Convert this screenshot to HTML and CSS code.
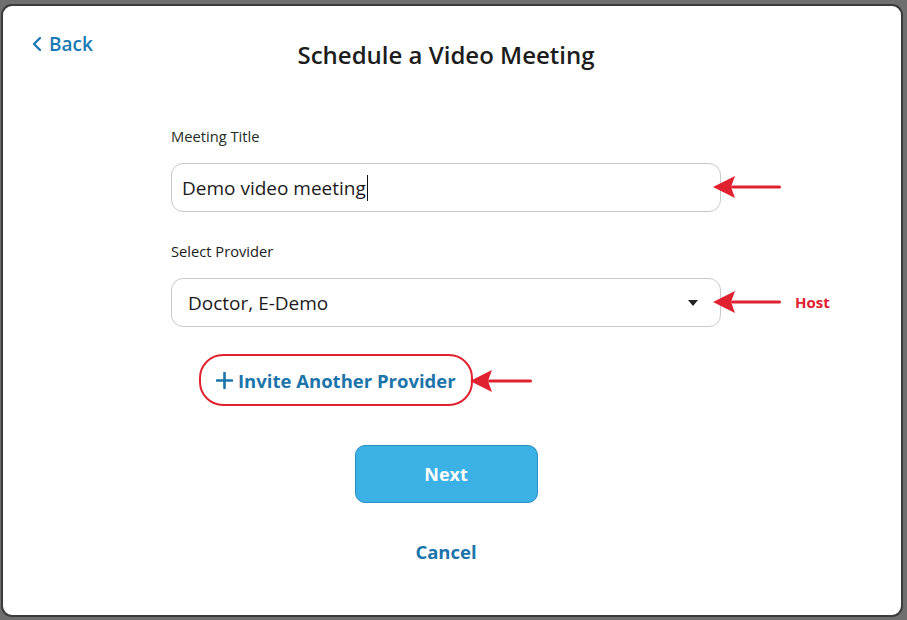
FILE: index.html
```html
<!DOCTYPE html>
<html>
<head>
<meta charset="utf-8">
<link rel="stylesheet" href="styles.css">
</head>
<body>
<div class="modal">
  <div class="header">
    <a class="back" href="#">
      <svg class="chev" width="12" height="16" viewBox="0 0 12 16"><path d="M9 2 L3 8 L9 14" fill="none" stroke="#1a7ab4" stroke-width="2.4" stroke-linecap="round" stroke-linejoin="round"/></svg>
      <span>Back</span>
    </a>
    <h1 class="title">Schedule a Video Meeting</h1>
  </div>
  <div class="content">
    <label class="label label-title">Meeting Title</label>
    <div class="field">
      <div class="input"><span>Demo video meeting</span><span class="caret"></span></div>
      <svg class="arrow arrow-1" width="70" height="26" viewBox="0 0 70 26"><path d="M0 13 L22 2 L18 13 L22 24 Z" fill="#e0212f"/><rect x="18" y="11.5" width="50" height="3" rx="1.5" fill="#e0212f"/></svg>
    </div>
    <label class="label label-provider">Select Provider</label>
    <div class="field">
      <div class="input select"><span>Doctor, E-Demo</span><span class="tri"></span></div>
      <svg class="arrow arrow-2" width="70" height="26" viewBox="0 0 70 26"><path d="M0 13 L22 2 L18 13 L22 24 Z" fill="#e0212f"/><rect x="18" y="11.5" width="50" height="3" rx="1.5" fill="#e0212f"/></svg>
      <span class="host">Host</span>
    </div>
    <div class="invite-row">
      <a class="invite" href="#"><svg class="plus" width="17" height="17" viewBox="0 0 17 17"><path d="M8.5 1 V16 M1 8.5 H16" stroke="#1b74aa" stroke-width="2.6" stroke-linecap="round"/></svg><span>Invite Another Provider</span></a>
      <svg class="arrow arrow-3" width="64" height="26" viewBox="0 0 64 26"><path d="M0 13 L22 2 L18 13 L22 24 Z" fill="#e0212f"/><rect x="18" y="11.5" width="44" height="3" rx="1.5" fill="#e0212f"/></svg>
    </div>
    <button class="next">Next</button>
    <a class="cancel" href="#">Cancel</a>
  </div>
</div>
</body>
</html>
```
FILE: styles.css
```css
* { box-sizing: border-box; }
html, body { margin: 0; padding: 0; }
body {
  width: 907px;
  height: 620px;
  background: #6f6f6f;
  padding: 4px 3px 3px 1px;
  font-family: "Open Sans", "Noto Sans", sans-serif;
  overflow: hidden;
}
.modal {
  width: 902px;
  height: 613px;
  background: #fff;
  border: 2px solid #3c3c3c;
  border-radius: 11px;
  display: flex;
  flex-direction: column;
}
.header {
  display: grid;
  grid-template-columns: 140px 550px;
  padding-left: 28px;
  padding-top: 26px;
}
.back {
  display: flex;
  align-items: center;
  gap: 6px;
  color: #1a7ab4;
  text-decoration: none;
  font-size: 19px;
  font-weight: 600;
  line-height: 24px;
  height: 24px;
}
.chev { display: block; }
.title {
  margin: 8px 0 0 0;
  text-align: center;
  font-size: 24px;
  font-weight: 600;
  line-height: 30px;
  color: #1d1d1d;
}
.content {
  margin-left: 168px;
  width: 550px;
  display: flex;
  flex-direction: column;
  align-items: flex-start;
}
.label {
  font-size: 14.7px;
  line-height: 18px;
  font-weight: 500;
  color: #1e2e24;
}
.label-title { margin-top: 57px; }
.label-provider { margin-top: 30px; color: #1c1c1c; }
.field {
  position: relative;
  width: 550px;
  margin-top: 18px;
}
.input {
  width: 550px;
  height: 49px;
  border: 1px solid #c9c9c9;
  border-radius: 12px;
  display: flex;
  align-items: center;
  padding-left: 10px;
  font-size: 19px;
  color: #1b1b1b;
}
.caret {
  display: inline-block;
  width: 1.5px;
  height: 26px;
  background: #111;
  margin-left: 1px;
}
.select { padding-left: 16px; padding-right: 22px; justify-content: space-between; }
.tri {
  width: 0; height: 0;
  border-left: 5px solid transparent;
  border-right: 5px solid transparent;
  border-top: 6px solid #222;
}
.arrow { position: absolute; top: 11px; left: 542px; }
.host {
  position: absolute;
  left: 624px;
  top: 14px;
  color: #e0212f;
  font-weight: 700;
  font-size: 15px;
  line-height: 20px;
}
.invite-row {
  position: relative;
  margin-top: 27px;
  margin-left: 28px;
}
.invite {
  display: flex;
  align-items: center;
  gap: 5px;
  height: 52px;
  width: 274px;
  border: 2.5px solid #e0212f;
  border-radius: 24px;
  padding-left: 15px;
  font-size: 18.5px;
  font-weight: 700;
  color: #1b74aa;
  text-decoration: none;
  white-space: nowrap;
}
.plus { display: block; flex: none; }
.arrow-3 { top: 14px; left: 271px; }
.next {
  margin-top: 39px;
  align-self: center;
  width: 183px;
  height: 58px;
  background: #3cb1e6;
  border: 1.5px solid #2a8ec2;
  border-radius: 10px;
  color: #fff;
  font-family: inherit;
  font-size: 18px;
  font-weight: 700;
}
.cancel {
  align-self: center;
  margin-top: 37px;
  font-size: 18.5px;
  font-weight: 700;
  line-height: 24px;
  color: #1b74aa;
  text-decoration: none;
}
```
